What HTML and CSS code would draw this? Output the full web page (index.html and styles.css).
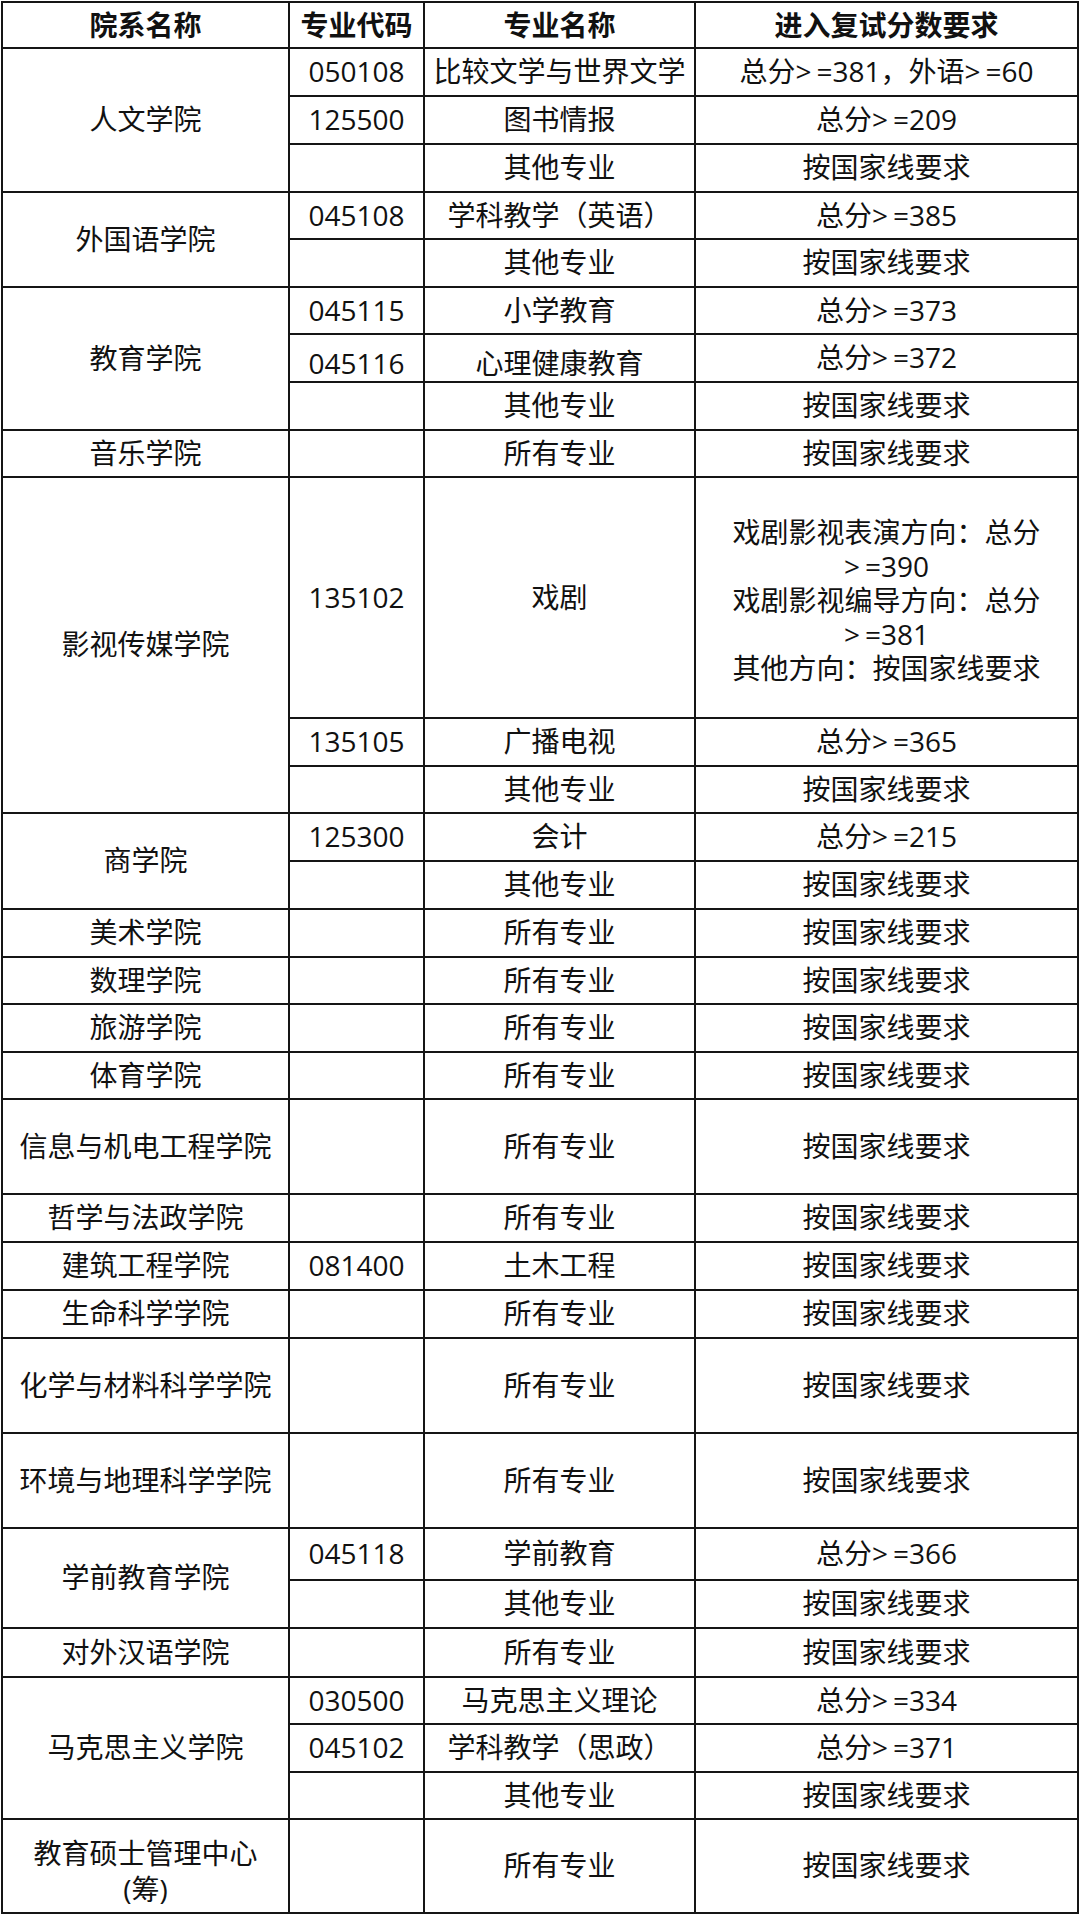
FILE: index.html
```html
<!DOCTYPE html>
<html lang="zh-CN">
<head>
<meta charset="utf-8">
<title>进入复试分数要求</title>
<link rel="stylesheet" href="styles.css">
</head>
<body>
<div class="sheet">
  <div class="cell head">院系名称</div>
  <div class="cell head">专业代码</div>
  <div class="cell head">专业名称</div>
  <div class="cell head">进入复试分数要求</div>

  <div class="cell span3">人文学院</div>
  <div class="cell">050108</div>
  <div class="cell">比较文学与世界文学</div>
  <div class="cell">总分<span class="gt">&gt;</span>=381，外语<span class="gt">&gt;</span>=60</div>
  <div class="cell">125500</div>
  <div class="cell">图书情报</div>
  <div class="cell">总分<span class="gt">&gt;</span>=209</div>
  <div class="cell"></div>
  <div class="cell">其他专业</div>
  <div class="cell">按国家线要求</div>

  <div class="cell span2">外国语学院</div>
  <div class="cell">045108</div>
  <div class="cell">学科教学（英语）</div>
  <div class="cell">总分<span class="gt">&gt;</span>=385</div>
  <div class="cell"></div>
  <div class="cell">其他专业</div>
  <div class="cell">按国家线要求</div>

  <div class="cell span3">教育学院</div>
  <div class="cell">045115</div>
  <div class="cell">小学教育</div>
  <div class="cell">总分<span class="gt">&gt;</span>=373</div>
  <div class="cell low">045116</div>
  <div class="cell low">心理健康教育</div>
  <div class="cell">总分<span class="gt">&gt;</span>=372</div>
  <div class="cell"></div>
  <div class="cell">其他专业</div>
  <div class="cell">按国家线要求</div>

  <div class="cell">音乐学院</div>
  <div class="cell"></div>
  <div class="cell">所有专业</div>
  <div class="cell">按国家线要求</div>

  <div class="cell span3">影视传媒学院</div>
  <div class="cell">135102</div>
  <div class="cell">戏剧</div>
  <div class="cell multi">
    <div class="ln">戏剧影视表演方向：总分</div>
    <div class="ln"><span class="gt">&gt;</span>=390</div>
    <div class="ln">戏剧影视编导方向：总分</div>
    <div class="ln"><span class="gt">&gt;</span>=381</div>
    <div class="ln">其他方向：按国家线要求</div>
  </div>
  <div class="cell">135105</div>
  <div class="cell">广播电视</div>
  <div class="cell">总分<span class="gt">&gt;</span>=365</div>
  <div class="cell"></div>
  <div class="cell">其他专业</div>
  <div class="cell">按国家线要求</div>

  <div class="cell span2">商学院</div>
  <div class="cell">125300</div>
  <div class="cell">会计</div>
  <div class="cell">总分<span class="gt">&gt;</span>=215</div>
  <div class="cell"></div>
  <div class="cell">其他专业</div>
  <div class="cell">按国家线要求</div>

  <div class="cell">美术学院</div>
  <div class="cell"></div>
  <div class="cell">所有专业</div>
  <div class="cell">按国家线要求</div>

  <div class="cell">数理学院</div>
  <div class="cell"></div>
  <div class="cell">所有专业</div>
  <div class="cell">按国家线要求</div>

  <div class="cell">旅游学院</div>
  <div class="cell"></div>
  <div class="cell">所有专业</div>
  <div class="cell">按国家线要求</div>

  <div class="cell">体育学院</div>
  <div class="cell"></div>
  <div class="cell">所有专业</div>
  <div class="cell">按国家线要求</div>

  <div class="cell">信息与机电工程学院</div>
  <div class="cell"></div>
  <div class="cell">所有专业</div>
  <div class="cell">按国家线要求</div>

  <div class="cell">哲学与法政学院</div>
  <div class="cell"></div>
  <div class="cell">所有专业</div>
  <div class="cell">按国家线要求</div>

  <div class="cell">建筑工程学院</div>
  <div class="cell">081400</div>
  <div class="cell">土木工程</div>
  <div class="cell">按国家线要求</div>

  <div class="cell">生命科学学院</div>
  <div class="cell"></div>
  <div class="cell">所有专业</div>
  <div class="cell">按国家线要求</div>

  <div class="cell">化学与材料科学学院</div>
  <div class="cell"></div>
  <div class="cell">所有专业</div>
  <div class="cell">按国家线要求</div>

  <div class="cell">环境与地理科学学院</div>
  <div class="cell"></div>
  <div class="cell">所有专业</div>
  <div class="cell">按国家线要求</div>

  <div class="cell span2">学前教育学院</div>
  <div class="cell">045118</div>
  <div class="cell">学前教育</div>
  <div class="cell">总分<span class="gt">&gt;</span>=366</div>
  <div class="cell"></div>
  <div class="cell">其他专业</div>
  <div class="cell">按国家线要求</div>

  <div class="cell">对外汉语学院</div>
  <div class="cell"></div>
  <div class="cell">所有专业</div>
  <div class="cell">按国家线要求</div>

  <div class="cell span3">马克思主义学院</div>
  <div class="cell">030500</div>
  <div class="cell">马克思主义理论</div>
  <div class="cell">总分<span class="gt">&gt;</span>=334</div>
  <div class="cell">045102</div>
  <div class="cell">学科教学（思政）</div>
  <div class="cell">总分<span class="gt">&gt;</span>=371</div>
  <div class="cell"></div>
  <div class="cell">其他专业</div>
  <div class="cell">按国家线要求</div>

  <div class="cell multi2">
    <div class="ln2">教育硕士管理中心</div>
    <div class="ln2">(筹)</div>
  </div>
  <div class="cell"></div>
  <div class="cell">所有专业</div>
  <div class="cell">按国家线要求</div>
</div>
</body>
</html>
```

FILE: styles.css
```css
html, body {
  margin: 0;
  padding: 0;
  background: #ffffff;
}

body {
  font-family: "Open Sans", "Noto Sans CJK SC", sans-serif;
  font-size: 28px;
  color: #111111;
}

.sheet {
  display: grid;
  width: max-content;
  margin: 1px 0 0 1px;
  grid-template-columns: 287px 135px 271px 383px;
  grid-template-rows:
    46px 48px 48px 48px
    47px 48px
    47px 48px 48px
    47px
    241px 48px 47px
    48px 48px
    48px 47px 48px 47px
    95px 48px 48px 48px 95px 95px
    52px 48px
    49px
    47px 48px 47px
    94px;
  border-top: 2px solid #151515;
  border-left: 2px solid #151515;
}

.cell {
  box-sizing: border-box;
  border-right: 2px solid #151515;
  border-bottom: 2px solid #151515;
  display: flex;
  align-items: center;
  justify-content: center;
  text-align: center;
  line-height: 1.2;
  white-space: nowrap;
}

.head {
  font-weight: 700;
  padding-top: 2px;
}

.span2 {
  grid-row: span 2;
}

.span3 {
  grid-row: span 3;
}

.gt {
  margin-right: 5px;
}

.low {
  padding-top: 12px;
}

.multi {
  flex-direction: column;
  padding-top: 4px;
}

.ln {
  height: 34px;
  line-height: 34px;
}

.multi2 {
  flex-direction: column;
  padding-top: 10px;
}

.ln2 {
  height: 36px;
  line-height: 36px;
}
```
